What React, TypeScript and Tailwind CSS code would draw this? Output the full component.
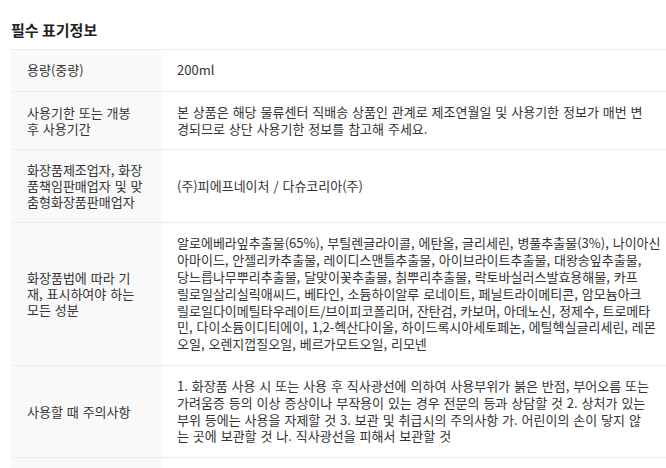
const rows: { label: string[]; value: string[] }[] = [
  { label: ["용량(중량)"], value: ["200ml"] },
  {
    label: ["사용기한 또는 개봉", "후 사용기간"],
    value: [
      "본 상품은 해당 물류센터 직배송 상품인 관계로 제조연월일 및 사용기한 정보가 매번 변",
      "경되므로 상단 사용기한 정보를 참고해 주세요.",
    ],
  },
  {
    label: ["화장품제조업자, 화장", "품책임판매업자 및 맞", "춤형화장품판매업자"],
    value: ["(주)피에프네이처 / 다슈코리아(주)"],
  },
  {
    label: ["화장품법에 따라 기", "재, 표시하여야 하는", "모든 성분"],
    value: [
      "알로에베라잎추출물(65%), 부틸렌글라이콜, 에탄올, 글리세린, 병풀추출물(3%), 나이아신",
      "아마이드, 안젤리카추출물, 레이디스맨틀추출물, 아이브라이트추출물, 대왕송잎추출물,",
      "당느릅나무뿌리추출물, 달맞이꽃추출물, 칡뿌리추출물, 락토바실러스발효용해물, 카프",
      "릴로일살리실릭애씨드, 베타인, 소듐하이알루 로네이트, 페닐트라이메티콘, 암모늄아크",
      "릴로일다이메틸타우레이트/브이피코폴리머, 잔탄검, 카보머, 아데노신, 정제수, 트로메타",
      "민, 다이소듐이디티에이, 1,2-헥산다이올, 하이드록시아세토페논, 에틸헥실글리세린, 레몬",
      "오일, 오렌지껍질오일, 베르가모트오일, 리모넨",
    ],
  },
  {
    label: ["사용할 때 주의사항"],
    value: [
      "1. 화장품 사용 시 또는 사용 후 직사광선에 의하여 사용부위가 붉은 반점, 부어오름 또는",
      "가려움증 등의 이상 증상이나 부작용이 있는 경우 전문의 등과 상담할 것 2. 상처가 있는",
      "부위 등에는 사용을 자제할 것 3. 보관 및 취급시의 주의사항 가. 어린이의 손이 닿지 않",
      "는 곳에 보관할 것 나. 직사광선을 피해서 보관할 것",
    ],
  },
];

export default function App() {
  return (
    <div
      className="w-[666px] h-[468px] overflow-hidden bg-white pl-[11px] pt-[19px]"
      style={{ fontFamily: '"Noto Sans CJK KR", "Noto Sans", sans-serif' }}
    >
      <h2 className="text-[15px] leading-[22px] font-bold text-[#222] mb-[8px]">필수 표기정보</h2>

      <div className="border-t border-[#ebebeb]">
        {rows.map((row, i) => (
          <div key={i} className="flex border-b border-[#ebebeb] text-[13px] text-[#333] [word-spacing:1px]">
            <div className="w-[150px] shrink-0 bg-[#f9f9f9] px-4 py-3 flex items-center leading-[16px]">
              <div>
                {row.label.map((l, j) => (
                  <div key={j} className="whitespace-nowrap">{l}</div>
                ))}
              </div>
            </div>
            <div className="flex-1 px-4 py-3 flex items-center leading-[16.8px]">
              <div>
                {row.value.map((v, j) => (
                  <div key={j} className="whitespace-nowrap">{v}</div>
                ))}
              </div>
            </div>
          </div>
        ))}
        {/* next row, only its top edge is in view */}
        <div className="flex h-[40px]">
          <div className="w-[150px] shrink-0 bg-[#f9f9f9]" />
          <div className="flex-1" />
        </div>
      </div>
    </div>
  );
}
